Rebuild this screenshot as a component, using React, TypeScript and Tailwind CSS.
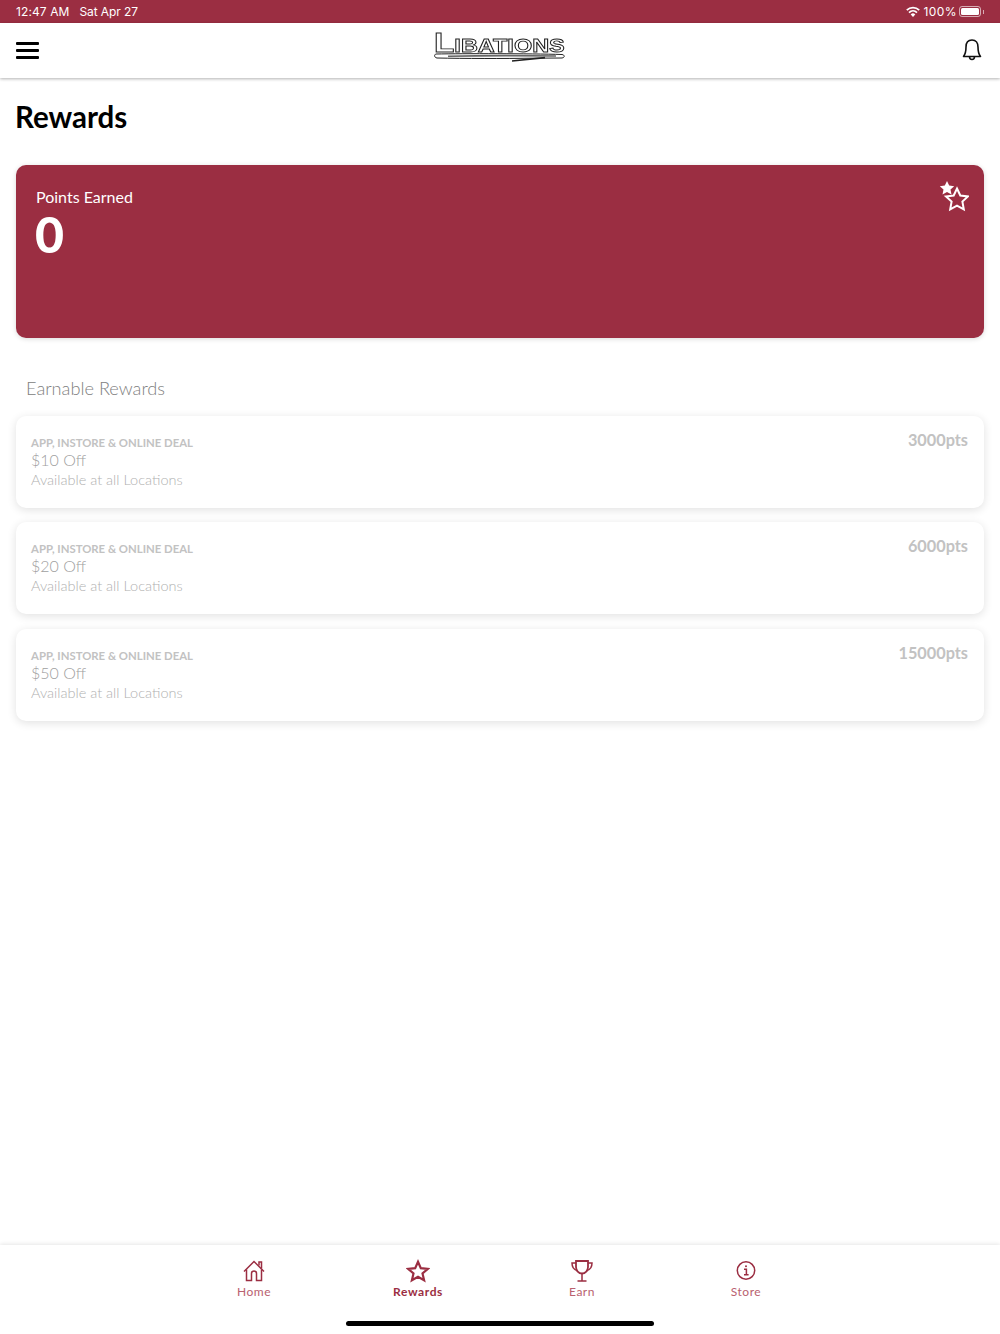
import React from 'react'

const rewards = [
  { title: '$10 Off', points: '3000pts' },
  { title: '$20 Off', points: '6000pts' },
  { title: '$50 Off', points: '15000pts' },
]

function Logo() {
  return (
    <div className="relative w-[132px] h-[30px]">
      <div className="absolute left-0 top-[-8px] origin-left [transform:scaleX(1.235)] will-change-transform font-['Liberation_Sans',sans-serif] font-bold text-[27px] leading-[36px] [font-variant:small-caps] text-white [-webkit-text-stroke:0.9px_#222] whitespace-nowrap">
        Libations
      </div>
      <svg className="absolute left-0 top-[20px]" width="132" height="10" viewBox="0 0 132 10" fill="none">
        <path d="M2 1 C30 0.5 95 0.5 128 1.5 C131 2 131 4.5 128 5 L98 5.2 C70 5.6 30 5.6 3 5 C0 4.5 0 1.5 2 1 Z" fill="white" stroke="#222" strokeWidth="1" />
        <path d="M14 3.2 C50 2.4 85 2.4 122 3" stroke="#666" strokeWidth="1.6" />
        <path d="M78 8 L111 4.6" stroke="#222" strokeWidth="1.6" />
      </svg>
    </div>
  )
}

function Wifi() {
  return (
    <svg width="14" height="11" viewBox="0 0 14 11" fill="white">
      <path d="M7 11 L4.7 8.4 A3.4 3.4 0 0 1 9.3 8.4 Z" />
      <path d="M3.6 7.2 L2.4 5.9 A6.8 6.8 0 0 1 11.6 5.9 L10.4 7.2 A5 5 0 0 0 3.6 7.2 Z" />
      <path d="M1.4 4.8 L0.2 3.5 A10 10 0 0 1 13.8 3.5 L12.6 4.8 A8.2 8.2 0 0 0 1.4 4.8 Z" />
    </svg>
  )
}

function Stars() {
  return (
    <svg width="30" height="32" viewBox="0 0 30 32">
      <path d="M8 1 L10.2 5.6 L15.2 6.2 L11.5 9.6 L12.5 14.6 L8 12.1 L3.5 14.6 L4.5 9.6 L0.8 6.2 L5.8 5.6 Z" fill="white" />
      <path d="M18 8.5 L21.3 15.5 L29 16.4 L23.4 21.6 L24.8 29.4 L18 25.6 L11.2 29.4 L12.6 21.6 L7 16.4 L14.7 15.5 Z" fill="none" stroke="white" strokeWidth="2" strokeLinejoin="miter" />
    </svg>
  )
}

function HomeIcon() {
  return (
    <svg width="24" height="24" viewBox="0 0 24 24" fill="none" stroke="#9b2e42" strokeWidth="1.5">
      <path d="M2 12.5 L12 2.5 L22 12.5" />
      <path d="M17 6.5 V3 H19.5 V9.5" />
      <path d="M4.5 10.5 V21.5 H9.5 V14.5 A2.5 2.5 0 0 1 14.5 14.5 V21.5 H19.5 V10.5" />
    </svg>
  )
}

function StarIcon() {
  return (
    <svg width="24" height="24" viewBox="0 0 24 24" fill="none" stroke="#9b2e42" strokeWidth="2.2">
      <path d="M12 2.8 L14.8 9.2 L21.8 9.9 L16.5 14.5 L18.1 21.3 L12 17.7 L5.9 21.3 L7.5 14.5 L2.2 9.9 L9.2 9.2 Z" />
    </svg>
  )
}

function TrophyIcon() {
  return (
    <svg width="24" height="24" viewBox="0 0 24 24" fill="none" stroke="#9b2e42" strokeWidth="1.5">
      <path d="M6 2 H18 V8 A6 6.5 0 0 1 6 8 Z" strokeWidth="1.8" />
      <path d="M6 4 H2 C2 8 3.5 10.5 7 11.5 M18 4 H22 C22 8 20.5 10.5 17 11.5" />
      <path d="M12 14.5 V21.5 M7.5 22 H16.5" />
    </svg>
  )
}

function InfoIcon() {
  return (
    <svg width="24" height="24" viewBox="0 0 24 24" fill="none" stroke="#9b2e42" strokeWidth="1.5">
      <circle cx="12" cy="11.5" r="8.7" />
      <path d="M10 10.2 H12.4 V15.6 M10 15.8 H14.6" />
      <circle cx="12" cy="7.3" r="1" fill="#9b2e42" stroke="none" />
    </svg>
  )
}

function TabItem({ icon, label, active }: { icon: React.ReactNode; label: string; active?: boolean }) {
  return (
    <div className="w-[164px] flex flex-col items-center">
      {icon}
      <span className={active ? 'mt-[1px] text-[12px] leading-[16px] tracking-[0.6px] font-bold text-[#9b2e42]' : 'mt-[1px] text-[12px] leading-[16px] tracking-[0.5px] text-[#b9616f]'}>
        {label}
      </span>
    </div>
  )
}

export default function App() {
  return (
    <div className="w-[1000px] h-[1334px] bg-white flex flex-col font-['Lato',sans-serif] overflow-hidden">
      <div className="h-[23px] bg-[#9b2e42] px-4 flex items-center justify-between text-white text-[12px] font-['Inter',sans-serif] tracking-[0.1px] shrink-0">
        <div className="flex gap-[10px]">
          <span>12:47 AM</span>
          <span className="tracking-[-0.1px]">Sat Apr 27</span>
        </div>
        <div className="flex items-center gap-1">
          <Wifi />
          <span className="tracking-[0.4px]">100%</span>
          <div className="w-[22px] h-[11px] -ml-[2px] border border-white/60 rounded-[3px] p-[1px]">
            <div className="w-full h-full bg-white rounded-[1.5px]" />
          </div>
          <div className="w-[1px] h-[4px] bg-white/60 -ml-[2px]" />
        </div>
      </div>

      <header className="relative z-10 h-[55px] bg-white shadow-[0_1px_3px_rgba(0,0,0,0.3)] shrink-0 px-4 flex items-center justify-between">
        <div className="w-[23px] flex flex-col gap-[4px]">
          <div className="h-[3px] bg-black rounded-[1px]" />
          <div className="h-[3px] bg-black rounded-[1px]" />
          <div className="h-[3px] bg-black rounded-[1px]" />
        </div>
        <div className="mb-[6px]">
          <Logo />
        </div>
        <svg width="24" height="24" viewBox="0 0 24 24" fill="none" stroke="#111" strokeWidth="1.6" strokeLinejoin="round" className="-mt-[2px]">
          <path d="M12 2 C8 2 6 5 6 9 C6 13 5.5 16 3.5 18.5 H20.5 C18.5 16 18 13 18 9 C18 5 16 2 12 2 Z" />
          <path d="M9.5 18.5 C9.5 22.5 14.5 22.5 14.5 18.5" />
        </svg>
      </header>

      <main className="flex-1 px-4">
        <h1 className="mt-[19px] -ml-[1px] text-[29.5px] leading-[40px] font-bold text-black">Rewards</h1>

        <section className="mt-[28px] h-[173px] rounded-[10px] bg-[#9b2e42] shadow-[0_1px_5px_rgba(0,0,0,0.15)] relative pl-5 pt-[21px] text-white">
          <div className="text-[16px] leading-[22px]">Points Earned</div>
          <div className="text-[50px] leading-[52px] font-black -ml-[1px]">0</div>
          <div className="absolute right-[15px] top-[15px]">
            <Stars />
          </div>
        </section>

        <h2 className="mt-[37px] ml-[10px] text-[18.2px] leading-[26px] font-light text-[#808080]">Earnable Rewards</h2>

        <div className="mt-[15px] flex flex-col gap-[14.4px]">
          {rewards.map(r => (
            <div key={r.title} className="h-[92px] rounded-[10px] bg-white shadow-[0_2px_10px_rgba(0,0,0,0.12)] pl-[15px] pr-4 pt-[19px] flex justify-between">
              <div>
                <div className="text-[11.35px] leading-[16px] font-bold text-[#c2c2c2]">APP, INSTORE &amp; ONLINE DEAL</div>
                <div className="text-[16px] leading-[18px] font-light text-[#a0a0a0]">{r.title}</div>
                <div className="text-[14.5px] leading-[22px] font-light text-[#b0b0b0]">Available at all Locations</div>
              </div>
              <div className="-mt-[5px] text-[16.3px] leading-[20px] font-bold text-[#c2c2c2]">{r.points}</div>
            </div>
          ))}
        </div>
      </main>

      <footer className="h-[89px] shrink-0 bg-white shadow-[0_-1px_4px_rgba(0,0,0,0.1)] relative pt-[14px] flex justify-center">
        <TabItem icon={<HomeIcon />} label="Home" />
        <TabItem icon={<StarIcon />} label="Rewards" active />
        <TabItem icon={<TrophyIcon />} label="Earn" />
        <TabItem icon={<InfoIcon />} label="Store" />
        <div className="absolute left-[346px] bottom-[8px] w-[308px] h-[5px] rounded-full bg-black" />
      </footer>
    </div>
  )
}
